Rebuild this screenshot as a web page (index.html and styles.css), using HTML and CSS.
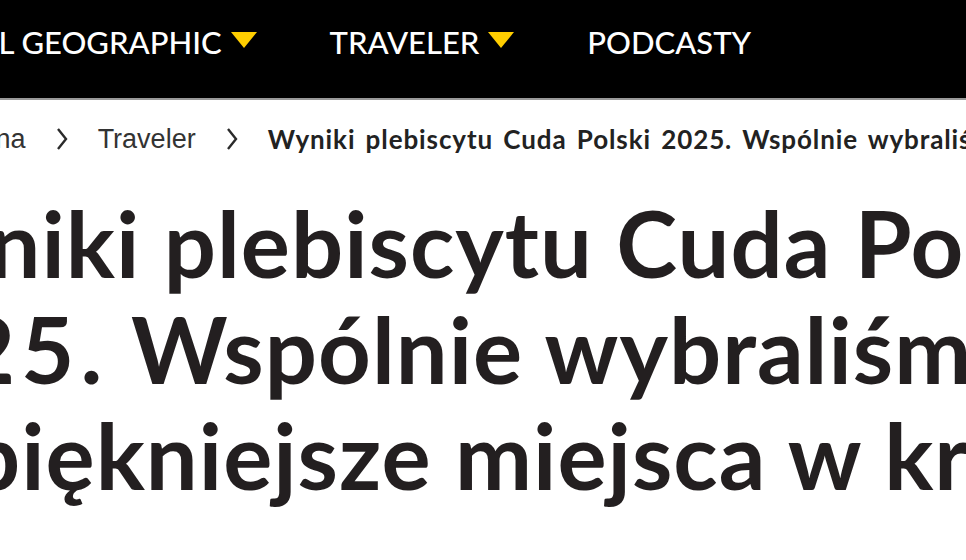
FILE: index.html
```html
<!DOCTYPE html>
<html lang="pl">
<head>
  <meta charset="UTF-8" />
  <meta name="viewport" content="width=device-width, initial-scale=1.0" />
  <title>Wyniki plebiscytu Cuda Polski 2025</title>
  <link rel="stylesheet" href="styles.css">
</head>
<body>

  <header class="topbar">
    <nav class="main-nav">
      <a href="#" class="nav-item">National Geographic <span class="caret"></span></a>
      <a href="#" class="nav-item">Traveler <span class="caret"></span></a>
      <a href="#" class="nav-item">Podcasty</a>
    </nav>
  </header>

  <!-- Breadcrumb -->
  <div class="breadcrumb">
    <a href="#" class="crumb">Strona główna</a>
    <svg class="sep" viewBox="0 0 12 22" width="12" height="22"><polyline points="2,1 10,11 2,21" /></svg>
    <a href="#" class="crumb">Traveler</a>
    <svg class="sep" viewBox="0 0 12 22" width="12" height="22"><polyline points="2,1 10,11 2,21" /></svg>
    <span class="crumb current">Wyniki plebiscytu Cuda Polski 2025. Wspólnie wybraliśmy najpiękniejsze miejsca w kraju</span>
  </div>

  <h1 class="article-title">Wyniki plebiscytu Cuda Polski<br><span class="year">2025.</span> Wspólnie wybraliśmy<br>najpiękniejsze miejsca w kraju</h1>

</body>
</html>
```

FILE: styles.css
```css
body {
  margin: 0;
  background: #fff;
  overflow: hidden;
  font-family: "Lato", "Liberation Sans", sans-serif;
}

/* Top navigation */
.topbar {
  background: #000;
  height: 98px;
  border-bottom: 2px solid #9a9a9a;
}

.main-nav {
  display: flex;
  align-items: center;
  height: 100%;
  box-sizing: border-box;
  padding-bottom: 14px;
  margin-left: -141px;
  white-space: nowrap;
}

.nav-item {
  display: flex;
  align-items: center;
  color: #fff;
  text-decoration: none;
  text-transform: uppercase;
  font-size: 31px;
  font-weight: 500;
  margin-right: 73px;
}

.caret {
  width: 0;
  height: 0;
  margin-left: 9px;
  margin-bottom: 4px;
  border-left: 13px solid transparent;
  border-right: 13px solid transparent;
  border-top: 16px solid #ffce00;
}

/* Breadcrumb */
.breadcrumb {
  display: flex;
  align-items: center;
  height: 78px;
  margin-left: -147px;
  white-space: nowrap;
}

.crumb {
  color: #333;
  text-decoration: none;
  font-family: "Liberation Sans", Arial, sans-serif;
  font-size: 27px;
}

.crumb.current {
  color: #222;
  font-family: "Lato", sans-serif;
  font-weight: 700;
  font-size: 26px;
  letter-spacing: 0.9px;
  word-spacing: 3px;
}

.sep {
  margin: 0 30px;
  flex-shrink: 0;
}

.sep polyline {
  fill: none;
  stroke: #2a2a2a;
  stroke-width: 2.4;
}

/* Title */
.article-title {
  margin: 12px 0 0 -157px;
  color: #231f20;
  font-family: "Lato", sans-serif;
  font-weight: 700;
  font-size: 92px;
  letter-spacing: 1px;
  line-height: 106px;
  white-space: nowrap;
}

.year {
  letter-spacing: 6px;
}
```
